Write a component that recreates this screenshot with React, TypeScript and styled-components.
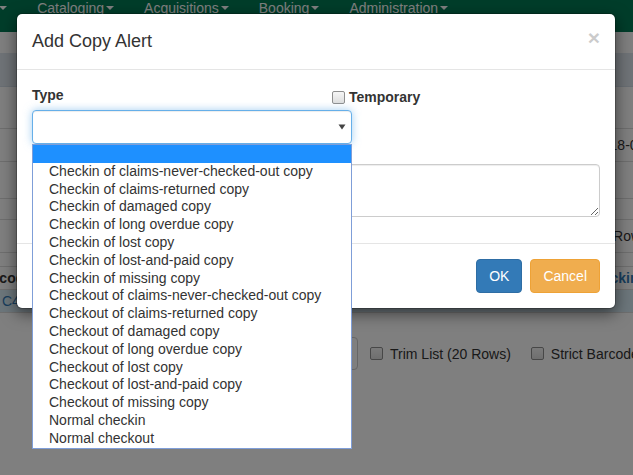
import React from "react";
import styled, { createGlobalStyle } from "styled-components";

const GlobalStyle = createGlobalStyle`
  html, body { margin: 0; padding: 0; }
  body {
    font-family: "Liberation Sans", Arial, Helvetica, sans-serif;
    font-size: 14px;
    color: #333;
    background: #fff;
    overflow: hidden;
  }
  * { box-sizing: border-box; }
`;

const Page = styled.div`
  position: relative;
  width: 633px;
  height: 475px;
  overflow: hidden;
  background: #fff;
`;

/* ---------- background page ---------- */

const NavBar = styled.nav`
  height: 32px;
  background: #007a54;
  overflow: hidden;
`;

const NavList = styled.ul`
  list-style: none;
  margin: 0 0 0 -84px;
  padding: 0;
  display: flex;
  white-space: nowrap;
`;

const NavItem = styled.li`
  padding: 0 15px;
  color: #fff;
  font-size: 14px;
  line-height: 16px;
  display: flex;
  align-items: center;
`;

const Caret = styled.span`
  display: inline-block;
  width: 0;
  height: 0;
  margin-left: 2px;
  border-top: 4px solid #fff;
  border-left: 4px solid transparent;
  border-right: 4px solid transparent;
`;

const Main = styled.div`
  padding-top: 21px;
  display: flex;
  flex-direction: column;
`;

const PanelBand = styled.div`
  height: 34px;
  background: #dfe7ef;
  border-bottom: 1px solid #d3dde6;
`;

const DataRow = styled.div<{ $h: number; $col: number; $bg?: string }>`
  height: ${(p) => p.$h}px;
  display: grid;
  grid-template-columns: ${(p) => p.$col}px 1fr;
  align-items: center;
  background: ${(p) => p.$bg || "transparent"};
  border-bottom: 1px solid #ddd;
  overflow: hidden;
  white-space: nowrap;
`;

const Cell = styled.div<{ $bold?: boolean; $link?: boolean; $shift?: number }>`
  font-weight: ${(p) => (p.$bold ? "bold" : "normal")};
  color: ${(p) => (p.$link ? "#337ab7" : "#333")};
  margin-left: ${(p) => p.$shift || 0}px;
`;

const BottomBar = styled.div`
  margin-top: 24px;
  display: flex;
  align-items: center;
  padding-left: 40px;
  white-space: nowrap;
`;

const BgInput = styled.div`
  flex: none;
  width: 318px;
  height: 33px;
  border: 1px solid #ccc;
  border-radius: 0 4px 4px 0;
  background: #fff;
`;

const BgCheckLabel = styled.label`
  flex: none;
  display: flex;
  align-items: center;
  gap: 7px;
  margin-left: 12px;
  color: #333;
  font-size: 14px;
  & + & {
    margin-left: 20px;
  }
`;

const CheckBox = styled.span`
  display: inline-block;
  width: 13px;
  height: 13px;
  border: 1px solid #8f8f8f;
  border-radius: 2px;
  background: linear-gradient(#f6f6f6, #dedede);
  flex: none;
`;

const Backdrop = styled.div`
  position: absolute;
  inset: 0;
  background: rgba(0, 0, 0, 0.5);
`;

/* ---------- modal ---------- */

const Modal = styled.div`
  position: absolute;
  left: 16px;
  top: 13px;
  width: 600px;
  background: #fff;
  border: 1px solid rgba(0, 0, 0, 0.2);
  border-radius: 6px;
  box-shadow: 0 5px 15px rgba(0, 0, 0, 0.5);
  background-clip: padding-box;
`;

const ModalHeader = styled.div`
  display: flex;
  justify-content: space-between;
  align-items: flex-start;
  padding: 15px;
  border-bottom: 1px solid #e5e5e5;
`;

const Title = styled.h4`
  margin: 0;
  font-size: 18px;
  line-height: 25px;
  font-weight: normal;
  color: #333;
`;

const Close = styled.button`
  margin-top: -2px;
  padding: 0;
  border: 0;
  background: transparent;
  font-family: "Liberation Sans", Arial, sans-serif;
  font-size: 21px;
  font-weight: bold;
  line-height: 21px;
  color: #000;
  opacity: 0.2;
  cursor: pointer;
`;

const ModalBody = styled.div`
  padding: 15px 15px 26px;
`;

const TopGrid = styled.div`
  display: grid;
  grid-template-columns: 300px 1fr;
  align-items: start;
`;

const Field = styled.div`
  display: flex;
  flex-direction: column;
`;

const Label = styled.label`
  font-weight: bold;
  line-height: 20px;
  margin-bottom: 5px;
  color: #333;
`;

const CheckLabel = styled.label`
  display: flex;
  align-items: center;
  gap: 4px;
  margin-top: 2px;
  font-weight: bold;
  line-height: 20px;
  color: #333;
`;

const SelectWrap = styled.div`
  position: relative;
  width: 320px;
  z-index: 2;
`;

const SelectBox = styled.div`
  height: 34px;
  border: 1px solid #66afe9;
  border-radius: 4px;
  background: #fff;
  box-shadow: inset 0 1px 1px rgba(0, 0, 0, 0.075), 0 0 8px rgba(102, 175, 233, 0.6);
  display: flex;
  align-items: center;
  justify-content: flex-end;
  padding-right: 5px;
`;

const OptionList = styled.ul`
  position: absolute;
  left: 0;
  top: 100%;
  width: 320px;
  margin: 0;
  padding: 0;
  list-style: none;
  background: #fff;
  border: 1px solid #7f9ed8;
`;

const Option = styled.li<{ $active?: boolean }>`
  height: 17.8px;
  line-height: 17.8px;
  padding-left: 16px;
  font-size: 14px;
  color: #333;
  white-space: nowrap;
  background: ${(p) => (p.$active ? "#1e90ff" : "#fff")};
`;

const NoteArea = styled.textarea`
  display: block;
  width: 100%;
  height: 53px;
  margin-top: 20px;
  border: 1px solid #ccc;
  border-radius: 4px;
  box-shadow: inset 0 1px 1px rgba(0, 0, 0, 0.075);
  font-family: inherit;
  font-size: 14px;
  padding: 6px 12px;
`;

const ModalFooter = styled.div`
  display: flex;
  justify-content: flex-end;
  gap: 8px;
  padding: 15px;
  border-top: 1px solid #e5e5e5;
`;

const Btn = styled.button<{ $kind: "primary" | "warning" }>`
  font-family: "Liberation Sans", Arial, sans-serif;
  font-size: 14px;
  line-height: 20px;
  padding: 6px 12px;
  border-radius: 4px;
  color: #fff;
  border: 1px solid ${(p) => (p.$kind === "primary" ? "#2e6da4" : "#eea236")};
  background: ${(p) => (p.$kind === "primary" ? "#337ab7" : "#f0ad4e")};
`;

const options = [
  "",
  "Checkin of claims-never-checked-out copy",
  "Checkin of claims-returned copy",
  "Checkin of damaged copy",
  "Checkin of long overdue copy",
  "Checkin of lost copy",
  "Checkin of lost-and-paid copy",
  "Checkin of missing copy",
  "Checkout of claims-never-checked-out copy",
  "Checkout of claims-returned copy",
  "Checkout of damaged copy",
  "Checkout of long overdue copy",
  "Checkout of lost copy",
  "Checkout of lost-and-paid copy",
  "Checkout of missing copy",
  "Normal checkin",
  "Normal checkout",
];

const navItems = ["Circulation", "Cataloging", "Acquisitions", "Booking", "Administration"];

const Arrow = () => (
  <svg width="8" height="6" viewBox="0 0 8 6">
    <path d="M0.5 0.5 L7.5 0.5 L4 5.5 Z" fill="#444" />
  </svg>
);

export default function App() {
  return (
    <Page>
      <GlobalStyle />
      <NavBar>
        <NavList>
          {navItems.map((n) => (
            <NavItem key={n}>
              {n}
              <Caret />
            </NavItem>
          ))}
        </NavList>
      </NavBar>
      <Main>
        <PanelBand />
        <DataRow $h={42} $col={594} />
        <DataRow $h={33} $col={594}>
          <Cell />
          <Cell>2018-06-11</Cell>
        </DataRow>
        <DataRow $h={37} $col={594} />
        <DataRow $h={21} $col={594} />
        <DataRow $h={33} $col={589}>
          <Cell />
          <Cell>(20 Rows)</Cell>
        </DataRow>
        <DataRow $h={14} $col={594} />
        <DataRow $h={23} $col={584}>
          <Cell $bold $shift={-24}>Barcode</Cell>
          <Cell $bold $link>Checkin</Cell>
        </DataRow>
        <DataRow $h={23} $col={594} $bg="#d9edf7">
          <Cell $link $shift={2}>C4000321</Cell>
          <Cell />
        </DataRow>
        <BottomBar>
          <BgInput />
          <BgCheckLabel>
            <CheckBox />
            Trim List (20 Rows)
          </BgCheckLabel>
          <BgCheckLabel>
            <CheckBox />
            Strict Barcode
          </BgCheckLabel>
        </BottomBar>
      </Main>

      <Backdrop />

      <Modal>
        <ModalHeader>
          <Title>Add Copy Alert</Title>
          <Close aria-label="Close">×</Close>
        </ModalHeader>
        <ModalBody>
          <TopGrid>
            <Field>
              <Label>Type</Label>
              <SelectWrap>
                <SelectBox>
                  <Arrow />
                </SelectBox>
                <OptionList>
                  {options.map((o, i) => (
                    <Option key={i} $active={i === 0}>
                      {o}
                    </Option>
                  ))}
                </OptionList>
              </SelectWrap>
            </Field>
            <CheckLabel>
              <CheckBox />
              Temporary
            </CheckLabel>
          </TopGrid>
          <NoteArea />
        </ModalBody>
        <ModalFooter>
          <Btn $kind="primary">OK</Btn>
          <Btn $kind="warning">Cancel</Btn>
        </ModalFooter>
      </Modal>
    </Page>
  );
}
